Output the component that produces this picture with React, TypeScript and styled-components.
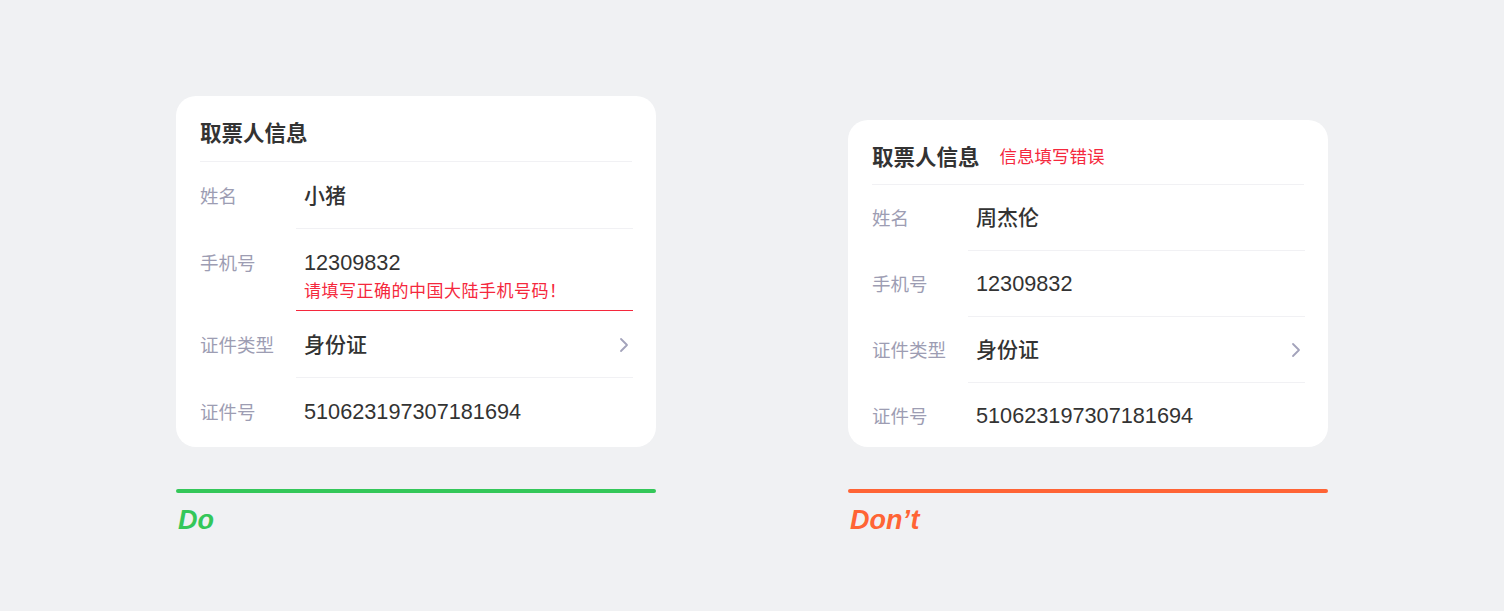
import React from "react";
import styled, { createGlobalStyle } from "styled-components";

const GlobalStyle = createGlobalStyle`
  html, body {
    margin: 0;
    padding: 0;
    background: #f0f1f3;
  }
  body {
    font-family: "Liberation Sans", "Noto Sans CJK SC", sans-serif;
    color: #333333;
  }
`;

const Page = styled.div`
  width: 1504px;
  height: 611px;
  box-sizing: border-box;
  padding: 96px 176px 0;
  display: grid;
  grid-template-columns: 480px 480px;
  column-gap: 192px;
  align-items: end;
  align-content: start;
`;

const Column = styled.div`
  display: flex;
  flex-direction: column;
`;

const Card = styled.div<{ $dense?: boolean }>`
  background: #ffffff;
  border-radius: 20px;
  padding: 0 24px 0 24px;
  display: flex;
  flex-direction: column;
  --row-pt: ${(p) => (p.$dense ? "19px" : "20px")};
  --row-pb: 18px;
  --last-pb: ${(p) => (p.$dense ? "17px" : "21px")};
  --head-pb: ${(p) => (p.$dense ? "14px" : "15px")};
`;

const Header = styled.div`
  display: flex;
  align-items: center;
  gap: 20px;
  padding: 22px 0 var(--head-pb) 0;
  border-bottom: 1px solid #f1f1f4;
`;

const Title = styled.div`
  font-family: "Noto Sans CJK SC", sans-serif;
  font-size: 21.5px;
  line-height: 28px;
  font-weight: 700;
  color: #333333;
`;

const HeaderError = styled.div`
  font-family: "Noto Sans CJK SC", sans-serif;
  font-size: 17.5px;
  line-height: 28px;
  color: #f5283d;
`;

const Row = styled.div`
  display: flex;
  align-items: flex-start;
`;

const Label = styled.div`
  width: 96px;
  flex: none;
  padding-top: var(--row-pt);
  font-family: "Noto Sans CJK SC", sans-serif;
  font-size: 18.5px;
  line-height: 26px;
  color: #9d9db3;
`;

const Field = styled.div<{ $error?: boolean; $last?: boolean }>`
  flex: 1;
  min-width: 0;
  display: flex;
  align-items: center;
  padding: var(--row-pt) 0
    ${(p) => (p.$error ? "8px" : p.$last ? "var(--last-pb)" : "var(--row-pb)")} 8px;
  border-bottom: ${(p) =>
    p.$last ? "none" : p.$error ? "1.5px solid #f5283d" : "1px solid #f1f1f4"};
  margin-right: -1px;
`;

const FieldBody = styled.div`
  flex: 1;
  display: flex;
  flex-direction: column;
`;

const Value = styled.div<{ $cjk?: boolean }>`
  font-size: ${(p) => (p.$cjk ? "21px" : "21.7px")};
  line-height: 28px;
  font-weight: ${(p) => (p.$cjk ? 500 : 400)};
  color: #333333;
  white-space: nowrap;
`;

const ErrorText = styled.div`
  margin-top: 1px;
  font-family: "Noto Sans CJK SC", sans-serif;
  font-size: 17px;
  letter-spacing: 0.5px;
  line-height: 24px;
  color: #f5283d;
  white-space: nowrap;
`;

const Chevron = styled.svg`
  flex: none;
  width: 10px;
  height: 16px;
  margin-right: 4px;
`;

const Bar = styled.div<{ $color: string }>`
  margin-top: 42px;
  height: 4px;
  border-radius: 2px;
  background: ${(p) => p.$color};
`;

const Verdict = styled.div<{ $color: string }>`
  margin-top: 14px;
  padding-left: 2px;
  font-family: "Liberation Sans", Arial, sans-serif;
  font-size: 27px;
  line-height: 27px;
  font-weight: 700;
  font-style: italic;
  color: ${(p) => p.$color};
`;

type FieldRow = {
  label: string;
  value: string;
  cjk?: boolean;
  chevron?: boolean;
  error?: string;
};

const ChevronIcon = () => (
  <Chevron viewBox="0 0 10 16">
    <polyline
      points="2,2 8,8 2,14"
      fill="none"
      stroke="#a3a3bb"
      strokeWidth="1.8"
      strokeLinecap="round"
      strokeLinejoin="round"
    />
  </Chevron>
);

const InfoCard = ({
  rows,
  headerError,
  dense,
}: {
  rows: FieldRow[];
  headerError?: string;
  dense?: boolean;
}) => (
  <Card $dense={dense}>
    <Header>
      <Title>取票人信息</Title>
      {headerError && <HeaderError>{headerError}</HeaderError>}
    </Header>
    {rows.map((r, i) => {
      const last = i === rows.length - 1;
      return (
        <Row key={r.label}>
          <Label>{r.label}</Label>
          <Field $error={!!r.error} $last={last}>
            <FieldBody>
              <Value $cjk={r.cjk}>{r.value}</Value>
              {r.error && <ErrorText>{r.error}</ErrorText>}
            </FieldBody>
            {r.chevron && <ChevronIcon />}
          </Field>
        </Row>
      );
    })}
  </Card>
);

export default function App() {
  return (
    <>
      <GlobalStyle />
      <Page>
        <Column>
          <InfoCard
            rows={[
              { label: "姓名", value: "小猪", cjk: true },
              {
                label: "手机号",
                value: "12309832",
                error: "请填写正确的中国大陆手机号码！",
              },
              { label: "证件类型", value: "身份证", cjk: true, chevron: true },
              { label: "证件号", value: "510623197307181694" },
            ]}
          />
          <Bar $color="#34c759" />
          <Verdict $color="#34c759">Do</Verdict>
        </Column>
        <Column>
          <InfoCard
            dense
            headerError="信息填写错误"
            rows={[
              { label: "姓名", value: "周杰伦", cjk: true },
              { label: "手机号", value: "12309832" },
              { label: "证件类型", value: "身份证", cjk: true, chevron: true },
              { label: "证件号", value: "510623197307181694" },
            ]}
          />
          <Bar $color="#ff6435" />
          <Verdict $color="#ff6435">Don’t</Verdict>
        </Column>
      </Page>
    </>
  );
}
